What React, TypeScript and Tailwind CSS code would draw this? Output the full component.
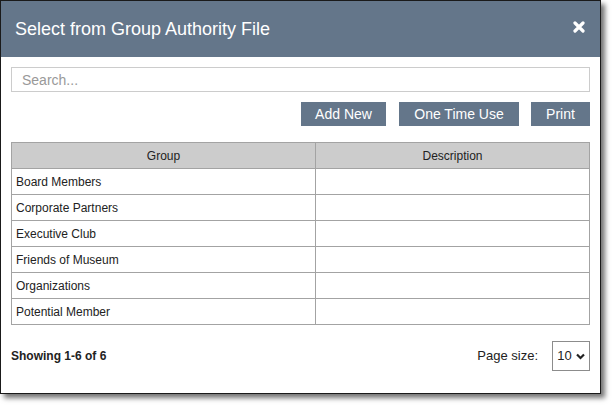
import { useState } from "react";

const groups = [
  "Board Members",
  "Corporate Partners",
  "Executive Club",
  "Friends of Museum",
  "Organizations",
  "Potential Member",
];

export default function App() {
  const [search, setSearch] = useState("");

  return (
    <div className="w-[615px] h-[411px] bg-white font-['Liberation_Sans',Arial,sans-serif]">
      <div className="w-[601px] h-[394px] border border-[#1a1a1a] bg-white shadow-[4px_4px_5px_rgba(0,0,0,0.55)] flex flex-col">
        {/* header */}
        <div className="h-[56px] bg-[#64768a] flex items-center justify-between pl-[14px] pr-[15px]">
          <div className="text-white text-[18px]">Select from Group Authority File</div>
          <svg width="12" height="12" viewBox="0 0 12 12" className="mb-[5px]">
            <path d="M2 2 L10 10 M10 2 L2 10" stroke="white" strokeWidth="3.2" strokeLinecap="round" />
          </svg>
        </div>

        <div className="px-[10px]">
          <input
            value={search}
            onChange={(e) => setSearch(e.target.value)}
            placeholder="Search..."
            className="mt-[10px] w-full h-[25px] border border-[#cccccc] px-[10px] text-[14px] text-[#333] placeholder:text-[#999] outline-none"
          />

          <div className="mt-[10px] flex justify-end">
            <button className="h-[24px] w-[85px] bg-[#64768a] text-white text-[14px]">Add New</button>
            <button className="ml-[13px] h-[24px] w-[120px] bg-[#64768a] text-white text-[14px]">One Time Use</button>
            <button className="ml-[12px] h-[24px] w-[59px] bg-[#64768a] text-white text-[14px]">Print</button>
          </div>

          <table className="mt-[16px] w-full border-collapse text-[12px] text-[#222]">
            <thead>
              <tr className="bg-[#cccccc] h-[26px]">
                <th className="w-[304px] border border-[#a3a3a3] font-normal">Group</th>
                <th className="border border-[#a3a3a3] font-normal">Description</th>
              </tr>
            </thead>
            <tbody>
              {groups.map((g) => (
                <tr key={g} className="h-[26px]">
                  <td className="border border-[#a3a3a3] px-[4px]">{g}</td>
                  <td className="border border-[#a3a3a3]"></td>
                </tr>
              ))}
            </tbody>
          </table>

          <div className="mt-[16px] flex items-center justify-between">
            <div className="text-[12px] font-bold text-[#222]">Showing 1-6 of 6</div>
            <div className="flex items-center">
              <span className="text-[13px] text-[#222] mr-[14px]">Page size:</span>
              <div className="h-[30px] w-[38px] border border-[#8c8c8c] flex items-center justify-center gap-[4px] text-[13px] text-[#222]">
                10
                <svg width="9" height="7" viewBox="0 0 9 7">
                  <path d="M1 1.5 L4.5 5 L8 1.5" stroke="#222" strokeWidth="2.2" fill="none" />
                </svg>
              </div>
            </div>
          </div>
        </div>
      </div>
    </div>
  );
}
